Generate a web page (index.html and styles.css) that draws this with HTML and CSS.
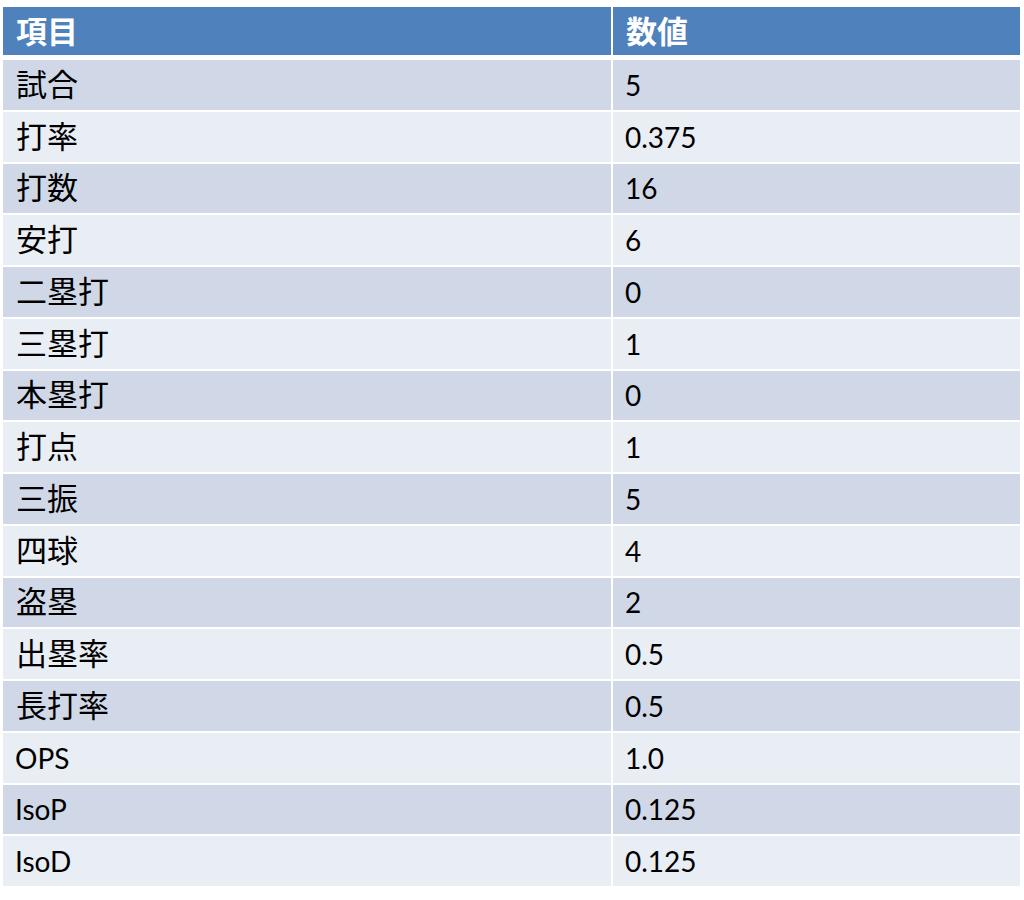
FILE: index.html
```html
<!DOCTYPE html>
<html lang="ja">
<head>
<meta charset="utf-8">
<link rel="stylesheet" href="styles.css">
</head>
<body>
<div class="table">
  <div class="head">
    <div class="cell"><span class="ja">項目</span></div>
    <div class="cell"><span class="ja">数値</span></div>
  </div>
  <div class="body">
    <div class="cell odd"><span class="ja">試合</span></div><div class="cell odd">5</div>
    <div class="cell even"><span class="ja">打率</span></div><div class="cell even">0.375</div>
    <div class="cell odd"><span class="ja">打数</span></div><div class="cell odd">16</div>
    <div class="cell even"><span class="ja">安打</span></div><div class="cell even">6</div>
    <div class="cell odd"><span class="ja">二塁打</span></div><div class="cell odd">0</div>
    <div class="cell even"><span class="ja">三塁打</span></div><div class="cell even">1</div>
    <div class="cell odd"><span class="ja">本塁打</span></div><div class="cell odd">0</div>
    <div class="cell even"><span class="ja">打点</span></div><div class="cell even">1</div>
    <div class="cell odd"><span class="ja">三振</span></div><div class="cell odd">5</div>
    <div class="cell even"><span class="ja">四球</span></div><div class="cell even">4</div>
    <div class="cell odd"><span class="ja">盗塁</span></div><div class="cell odd">2</div>
    <div class="cell even"><span class="ja">出塁率</span></div><div class="cell even">0.5</div>
    <div class="cell odd"><span class="ja">長打率</span></div><div class="cell odd">0.5</div>
    <div class="cell even">OPS</div><div class="cell even">1.0</div>
    <div class="cell odd">IsoP</div><div class="cell odd">0.125</div>
    <div class="cell even">IsoD</div><div class="cell even">0.125</div>
  </div>
</div>
</body>
</html>
```
FILE: styles.css
```css
html, body {
  margin: 0;
  padding: 0;
  background: #ffffff;
}
body {
  padding: 7px 0 0 3px;
  font-family: Lato, "Noto Sans CJK JP", sans-serif;
  font-size: 28px;
  color: #000000;
}
.table {
  width: 1017px;
  display: flex;
  flex-direction: column;
  gap: 5px;
}
.head, .body {
  display: grid;
  grid-template-columns: 608px 407px;
  column-gap: 2px;
}
.head {
  grid-template-rows: 48px;
}
.body {
  grid-template-rows: repeat(16, 49.75px);
  row-gap: 2px;
}
.cell {
  display: flex;
  align-items: center;
  padding-left: 12px;
  line-height: 1;
}
.head .cell {
  background: #4f81bd;
  color: #ffffff;
  font-weight: bold;
  padding-top: 2px;
}
.ja {
  font-family: "Noto Sans CJK JP", sans-serif;
  font-size: 31px;
  margin-left: 1px;
  margin-bottom: 5px;
}
.odd {
  background: #d0d8e8;
}
.even {
  background: #e9edf4;
}
```
